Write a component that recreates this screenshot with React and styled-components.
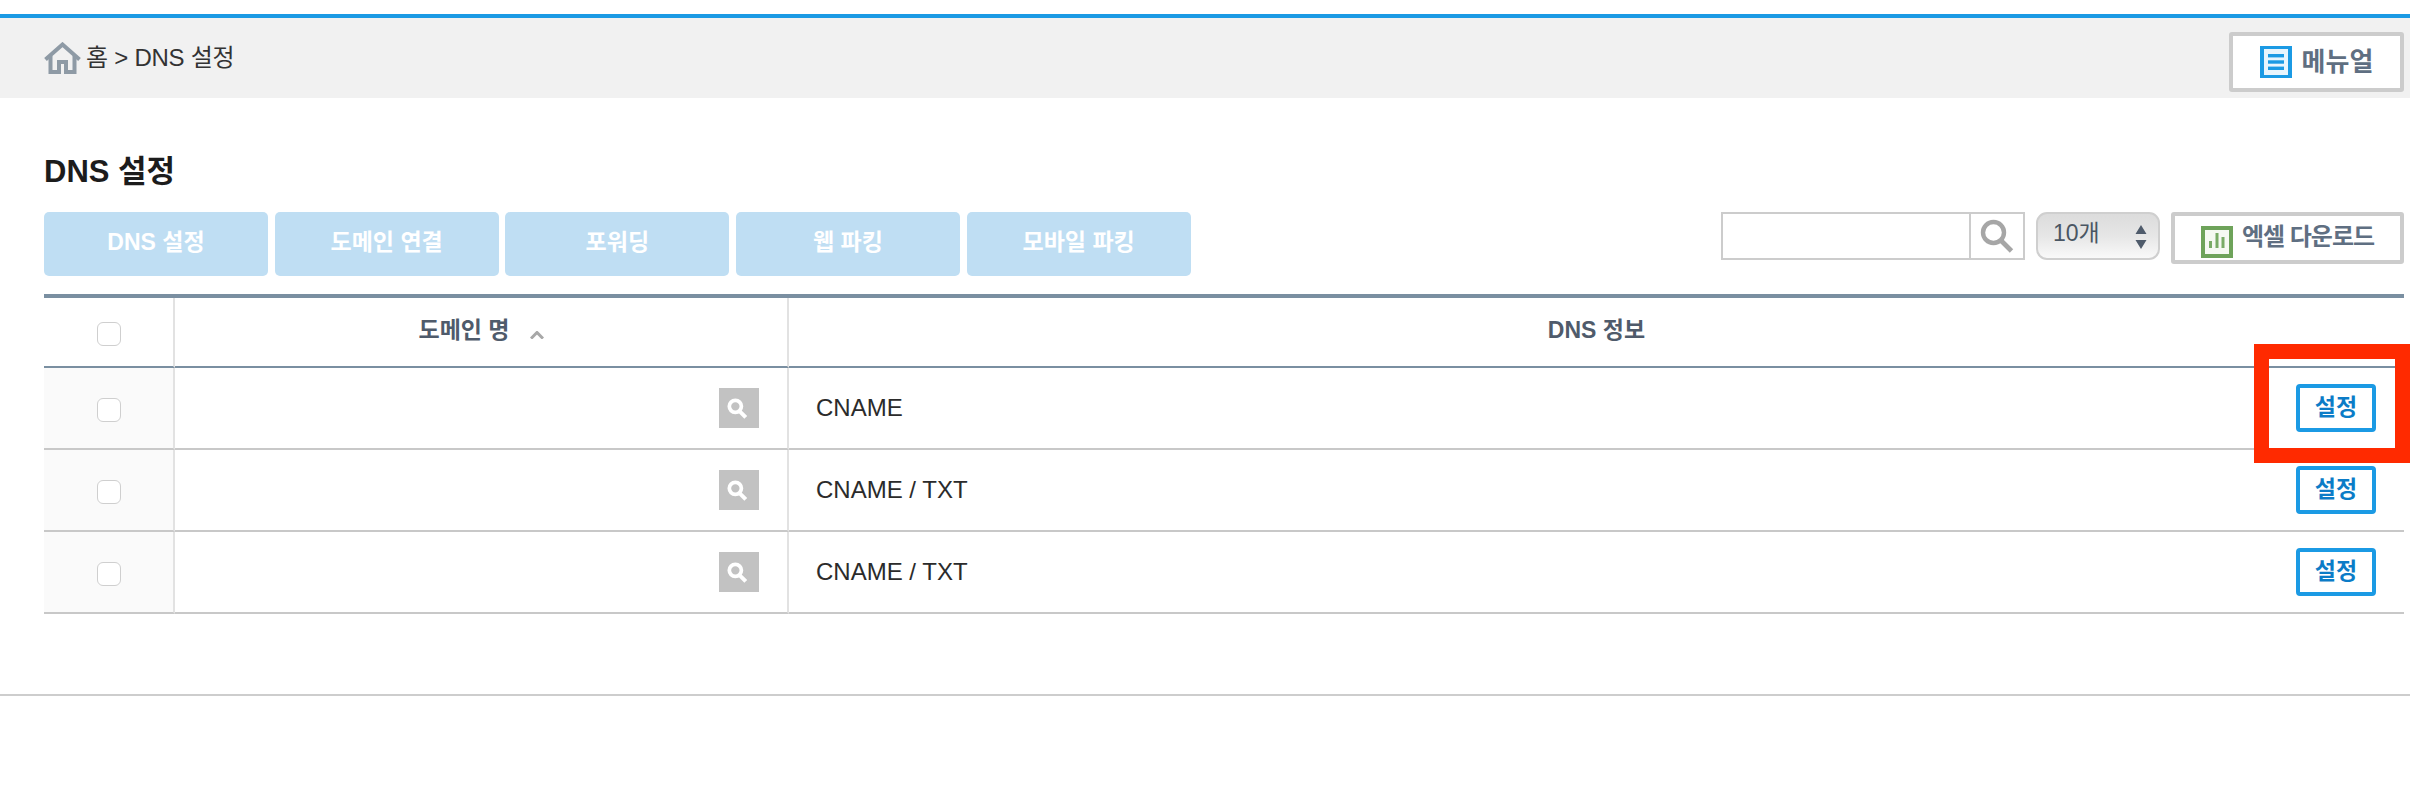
import React from 'react'
import styled, { createGlobalStyle } from 'styled-components'

const FONT = `"Liberation Sans", "Noto Sans CJK KR", sans-serif`

const GlobalStyle = createGlobalStyle`
  html, body {
    margin: 0;
    padding: 0;
    background: #fff;
    overflow: hidden;
  }
  body, button, input, select {
    font-family: ${FONT};
  }
`

const TABS = ['DNS 설정', '도메인 연결', '포워딩', '웹 파킹', '모바일 파킹']
const ROWS = ['CNAME', 'CNAME / TXT', 'CNAME / TXT']

const Page = styled.div`
  position: relative;
  padding-top: 14px;
  height: 792px;
`

const TopBar = styled.header`
  display: flex;
  align-items: center;
  justify-content: space-between;
  height: 80px;
  padding: 0 6px 0 44px;
  border-top: 4px solid #1b9ae4;
  background: #f1f1f1;
`

const Crumb = styled.div`
  display: flex;
  align-items: center;
  gap: 5px;
  font-size: 24px;
  letter-spacing: -0.25px;
  color: #333;
`

const CrumbText = styled.span`
  margin-bottom: 5px;
`

const OutlineButton = styled.button`
  display: flex;
  align-items: center;
  justify-content: center;
  box-sizing: border-box;
  padding: 0;
  background: #fff;
  border: 4px solid #ccc;
  border-radius: 3px;
  font-weight: 700;
  color: #5f6f82;
`

const ManualButton = styled(OutlineButton)`
  gap: 10px;
  width: 175px;
  height: 60px;
  font-size: 26px;
  margin-top: 8px;
`

const ExcelButton = styled(OutlineButton)`
  gap: 9px;
  width: 233px;
  height: 52px;
  font-size: 24px;
  letter-spacing: -1px;
`

const ButtonLabel = styled.span`
  margin-bottom: ${(p) => p.$lift}px;
`

const IconSlot = styled.span`
  display: flex;
  margin-top: ${(p) => p.$drop || 0}px;
`

const Main = styled.main`
  padding: 56px 6px 0 44px;
`

const Title = styled.h1`
  margin: 0;
  height: 58px;
  font-size: 31px;
  line-height: 36px;
  font-weight: 700;
  color: #1c1c1c;
`

const ToolRow = styled.div`
  display: flex;
  justify-content: space-between;
  align-items: flex-start;
  height: 82px;
`

const Tabs = styled.nav`
  display: flex;
  gap: 6.67px;
`

const Tab = styled.button`
  width: 224px;
  height: 64px;
  padding: 0 0 8px;
  border: 0;
  border-radius: 5px;
  background: #bfdef3;
  color: #fff;
  font-size: 23px;
  font-weight: 700;
`

const Tools = styled.div`
  display: flex;
  align-items: flex-start;
  gap: 11px;
`

const SearchBox = styled.div`
  display: flex;
  box-sizing: border-box;
  width: 304px;
  height: 48px;
  border: 2px solid #ccc;
`

const SearchInput = styled.input`
  flex: 1;
  min-width: 0;
  border: 0;
  outline: 0;
  padding: 0 8px;
  background: #fff;
`

const SearchButton = styled.button`
  display: flex;
  align-items: center;
  justify-content: center;
  width: 54px;
  padding: 0;
  border: 0;
  border-left: 2px solid #ccc;
  background: #fff;
`

const SelectWrap = styled.div`
  position: relative;
  width: 124px;
  height: 48px;
`

const PageSize = styled.select`
  appearance: none;
  box-sizing: border-box;
  width: 100%;
  height: 100%;
  padding: 0 0 6px 15px;
  border: 2px solid #cfcfcf;
  border-radius: 11px;
  background: linear-gradient(#dcdcdc, #e6e6e6 50%, #f9f9f9);
  font-size: 23px;
  color: #4a5663;
`

const SelectArrows = styled.svg`
  position: absolute;
  top: 13px;
  right: 13px;
  pointer-events: none;
`

const Table = styled.table`
  width: 100%;
  table-layout: fixed;
  border-collapse: separate;
  border-spacing: 0;
  border-top: 4px solid #7a8fa1;
`

const HeadCell = styled.th`
  box-sizing: border-box;
  height: 70px;
  padding: 0;
  border-bottom: 2px solid #7a8fa1;
  border-right: ${(p) => (p.$last ? '0' : '2px solid #e2e2e2')};
  font-size: 23px;
  font-weight: 700;
  color: #4f5b6b;
  vertical-align: middle;
`

const HeadInner = styled.span`
  display: inline-flex;
  align-items: center;
  gap: 20px;
  position: relative;
  top: -4px;
`

const CaretSvg = styled.svg`
  margin-top: 13px;
`

const Cell = styled.td`
  box-sizing: border-box;
  height: 82px;
  padding: 0;
  border-bottom: 2px solid #c8c8c8;
  border-right: ${(p) => (p.$last ? '0' : '2px solid #e2e2e2')};
  background: ${(p) => (p.$shaded ? '#fafafa' : '#fff')};
`

const CheckWrap = styled.div`
  display: flex;
  justify-content: center;
`

const Check = styled.input.attrs({ type: 'checkbox' })`
  appearance: none;
  display: block;
  box-sizing: border-box;
  width: 24px;
  height: 24px;
  margin: 4px 0 0;
  border: 1.5px solid #cfcfcf;
  border-radius: 6px;
  background: #fff;
`

const DomainCell = styled.div`
  display: flex;
  justify-content: flex-end;
  padding: 0 28px 0 0;
`

const ZoomButton = styled.button`
  display: flex;
  align-items: center;
  justify-content: center;
  width: 40px;
  height: 40px;
  padding: 0 4px 0 0;
  border: 0;
  background: #c2c2c2;
`

const InfoCell = styled.div`
  display: flex;
  align-items: center;
  justify-content: space-between;
  padding: 0 28px 0 27px;
  font-size: 24px;
  color: #2b2b2b;
`

const SetButton = styled.button`
  box-sizing: border-box;
  width: 80px;
  height: 48px;
  padding: 0 0 6px;
  border: 4px solid #1b9ae4;
  border-radius: 4px;
  background: #fff;
  color: #0b7cc7;
  font-size: 23px;
  font-weight: 700;
`

const FootLine = styled.div`
  height: 2px;
  margin-top: 80px;
  background: #cdcdcd;
`

const Highlight = styled.div`
  position: absolute;
  left: 2254px;
  top: 344px;
  width: 126px;
  height: 89px;
  border: 15px solid #ff2a00;
`

const HomeIcon = () => (
  <svg width="37" height="32" viewBox="0 0 37 32" fill="none" stroke="#8e9aa5" strokeWidth="4">
    <path d="M1.5 17.5 18.5 2.5l17 15" />
    <path d="M6.5 14v16h8.5V20h7v10h8.5V14" />
  </svg>
)

const ManualIcon = () => (
  <svg width="32" height="32" viewBox="0 0 32 32">
    <rect width="32" height="32" fill="#1b9ae4" />
    <rect x="4" y="3" width="24" height="26" fill="#e8f5fd" />
    <rect x="8" y="8" width="16" height="3.4" fill="#1b9ae4" />
    <rect x="8" y="14.3" width="16" height="3.4" fill="#1b9ae4" />
    <rect x="8" y="20.6" width="16" height="3.4" fill="#1b9ae4" />
  </svg>
)

const ExcelIcon = () => (
  <svg width="32" height="32" viewBox="0 0 32 32">
    <rect width="32" height="32" fill="#6ea35a" />
    <rect x="4" y="4" width="24" height="24" fill="#f5f9f2" />
    <rect x="8" y="15" width="3" height="7" fill="#79ab66" />
    <rect x="14.5" y="7" width="3" height="15" fill="#79ab66" />
    <rect x="20.5" y="11" width="3" height="11" fill="#79ab66" />
  </svg>
)

const LensIcon = () => (
  <svg width="34" height="34" viewBox="0 0 34 34" fill="none" stroke="#a6a6a6">
    <circle cx="13.5" cy="13.5" r="10.5" strokeWidth="4.4" />
    <path d="M21 21.5 31.5 32" strokeWidth="4.8" />
  </svg>
)

const SmallLens = () => (
  <svg width="22" height="22" viewBox="0 0 20 20" fill="none" stroke="#fff">
    <circle cx="8.5" cy="8.5" r="5.5" strokeWidth="3.4" />
    <path d="M12.5 13 18 18.5" strokeWidth="3.6" />
  </svg>
)

const SortCaret = () => (
  <CaretSvg width="14" height="8" viewBox="0 0 14 8" fill="none" stroke="#a8a8a8" strokeWidth="3">
    <path d="M1 7.5 7 1.5l6 6" />
  </CaretSvg>
)

const TableRow = ({ info }) => (
  <tr>
    <Cell $shaded>
      <CheckWrap>
        <Check />
      </CheckWrap>
    </Cell>
    <Cell>
      <DomainCell>
        <ZoomButton aria-label="검색">
          <SmallLens />
        </ZoomButton>
      </DomainCell>
    </Cell>
    <Cell $last>
      <InfoCell>
        <span>{info}</span>
        <SetButton>설정</SetButton>
      </InfoCell>
    </Cell>
  </tr>
)

export default function App() {
  return (
    <Page>
      <GlobalStyle />
      <TopBar>
        <Crumb>
          <HomeIcon />
          <CrumbText>홈 &gt; DNS 설정</CrumbText>
        </Crumb>
        <ManualButton>
          <ManualIcon />
          <ButtonLabel $lift={6}>메뉴얼</ButtonLabel>
        </ManualButton>
      </TopBar>
      <Main>
        <Title>DNS 설정</Title>
        <ToolRow>
          <Tabs>
            {TABS.map((t) => (
              <Tab key={t}>{t}</Tab>
            ))}
          </Tabs>
          <Tools>
            <SearchBox>
              <SearchInput />
              <SearchButton aria-label="검색">
                <LensIcon />
              </SearchButton>
            </SearchBox>
            <SelectWrap>
              <PageSize defaultValue="10">
                <option value="10">10개</option>
                <option value="20">20개</option>
              </PageSize>
              <SelectArrows width="12" height="24" viewBox="0 0 12 24" fill="#4f5b6b">
                <path d="M6 0l5.5 9H.5zM6 24 .5 15h11z" />
              </SelectArrows>
            </SelectWrap>
            <ExcelButton>
              <IconSlot $drop={8}>
                <ExcelIcon />
              </IconSlot>
              <ButtonLabel $lift={8}>엑셀 다운로드</ButtonLabel>
            </ExcelButton>
          </Tools>
        </ToolRow>
        <Table>
          <colgroup>
            <col width="131" />
            <col width="614" />
            <col />
          </colgroup>
          <thead>
            <tr>
              <HeadCell>
                <CheckWrap>
                  <Check />
                </CheckWrap>
              </HeadCell>
              <HeadCell>
                <HeadInner>
                  도메인 명
                  <SortCaret />
                </HeadInner>
              </HeadCell>
              <HeadCell $last>
                <HeadInner>DNS 정보</HeadInner>
              </HeadCell>
            </tr>
          </thead>
          <tbody>
            {ROWS.map((info, i) => (
              <TableRow key={i} info={info} />
            ))}
          </tbody>
        </Table>
      </Main>
      <FootLine />
      <Highlight />
    </Page>
  )
}
